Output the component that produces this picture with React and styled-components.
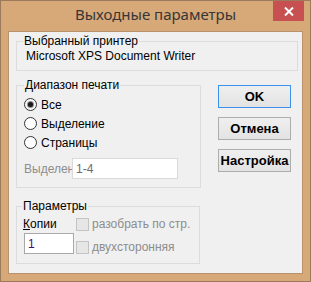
import React from "react";
import styled, { createGlobalStyle } from "styled-components";

const Global = createGlobalStyle`
  html, body { margin: 0; padding: 0; background: #ffffff; }
  * { box-sizing: border-box; }
`;

const Window = styled.div`
  width: 311px;
  height: 282px;
  background: #d7a979;
  border: 1px solid #9c7a5c;
  display: flex;
  flex-direction: column;
  padding: 0 7px 7px 7px;
  font-family: "Liberation Sans", Arial, sans-serif;
  font-size: 12px;
  color: #000;
`;

const TitleBar = styled.div`
  position: relative;
  height: 30px;
  display: flex;
  justify-content: center;
  align-items: flex-start;
  padding-top: 3px;
  margin: 0 -7px;
`;

const Title = styled.div`
  font-family: "Noto Sans", "Open Sans", sans-serif;
  font-size: 15px;
  line-height: 20px;
  color: #363636;
`;

const CloseButton = styled.div`
  position: absolute;
  top: 0;
  right: 6px;
  width: 31px;
  height: 20px;
  background: #c75050;
  display: flex;
  align-items: center;
  justify-content: center;
`;

const Client = styled.div`
  flex: 1;
  background: #f0f0f0;
  border: 1px solid #b8926c;
  padding: 3px 4px 0 7px;
  display: flex;
  flex-direction: column;
`;

const Group = styled.fieldset`
  margin: 0;
  border: 1px solid #dcdcdc;
  width: ${(p) => p.$w}px;
  height: ${(p) => p.$h}px;
  padding: ${(p) => p.$pad};
  min-inline-size: 0;
  margin-top: ${(p) => p.$mt || 0}px;
`;

const Legend = styled.legend`
  font-size: 12px;
  line-height: 13px;
  padding: 0 1px;
  margin-left: ${(p) => p.$ml}px;
`;

const PrinterName = styled.div`
  line-height: 14px;
`;

const Row = styled.div`
  display: flex;
  margin-top: 8px;
`;

const LeftColumn = styled.div`
  display: flex;
  flex-direction: column;
  width: 185px;
`;

const ButtonColumn = styled.div`
  display: flex;
  flex-direction: column;
  gap: 9px;
  margin-left: 17px;
  margin-top: 6px;
`;

const Button = styled.div`
  width: 73px;
  height: 23px;
  display: flex;
  align-items: center;
  justify-content: center;
  border: 1px solid ${(p) => (p.$default ? "#3c92ea" : "#adadad")};
  background: linear-gradient(#efefef, #e3e3e3);
  font-family: "Liberation Sans", Arial, sans-serif;
  font-weight: bold;
  font-size: 13px;
  color: #000;
`;

const RadioList = styled.div`
  display: flex;
  flex-direction: column;
  padding-top: 3px;
`;

const RadioRow = styled.div`
  height: 19px;
  display: flex;
  align-items: center;
  gap: 4px;
`;

const RadioCircle = styled.span`
  width: 13px;
  height: 13px;
  border-radius: 50%;
  border: 1px solid #333;
  background: #fff;
  display: flex;
  align-items: center;
  justify-content: center;
  &::after {
    content: "";
    width: 5px;
    height: 5px;
    border-radius: 50%;
    background: ${(p) => (p.$checked ? "#1a1a1a" : "transparent")};
    box-shadow: ${(p) => (p.$checked ? "0 0 1px 1px rgba(30,30,30,0.55)" : "none")};
  }
`;

const RangeRow = styled.div`
  display: flex;
  align-items: center;
  margin-top: 6px;
`;

const ClippedLabel = styled.span`
  width: 48px;
  overflow: hidden;
  white-space: nowrap;
  color: #8d8d8d;
`;

const TextBox = styled.div`
  width: ${(p) => p.$w}px;
  height: 21px;
  background: #fff;
  border: 1px solid ${(p) => (p.$disabled ? "#dadada" : "#a9a9a9")};
  padding-left: 3px;
  display: flex;
  align-items: center;
  color: ${(p) => (p.$disabled ? "#6d6d6d" : "#4a0a6a")};
  font-size: 12px;
`;

const ParamsBody = styled.div`
  display: flex;
  gap: 2px;
  padding-top: 4px;
`;

const CopiesColumn = styled.div`
  display: flex;
  flex-direction: column;
  gap: 2px;
  width: 51px;
`;

const CopiesLabel = styled.div`
  line-height: 14px;
  & u { text-decoration: underline; }
`;

const CopiesBox = styled(TextBox)`
  margin-left: 1px;
`;

const CheckColumn = styled.div`
  display: flex;
  flex-direction: column;
  gap: 9px;
`;

const CheckRow = styled.div`
  height: 14px;
  display: flex;
  align-items: center;
  gap: 3px;
  color: #8d8d8d;
`;

const CheckBox = styled.span`
  width: 13px;
  height: 13px;
  border: 1px solid #c4c4c4;
  background: #e6e6e6;
`;

export default function App() {
  return (
    <>
      <Global />
      <Window>
        <TitleBar>
          <Title>Выходные параметры</Title>
          <CloseButton>
            <svg width="10" height="9" viewBox="0 0 10 9">
              <path d="M1 0.5 L9 8.5 M9 0.5 L1 8.5" stroke="#fff" strokeWidth="2" />
            </svg>
          </CloseButton>
        </TitleBar>
        <Client>
          <Group $w={282} $h={36} $pad="1px 8px 0 9px">
            <Legend $ml={-3}>Выбранный принтер</Legend>
            <PrinterName>Microsoft XPS Document Writer</PrinterName>
          </Group>
          <Row>
            <LeftColumn>
              <Group $w={185} $h={109} $pad="0 7px 0 7px">
                <Legend $ml={0}>Диапазон печати</Legend>
                <RadioList>
                  <RadioRow>
                    <RadioCircle $checked />
                    <span>Все</span>
                  </RadioRow>
                  <RadioRow>
                    <RadioCircle />
                    <span>Выделение</span>
                  </RadioRow>
                  <RadioRow>
                    <RadioCircle />
                    <span>Страницы</span>
                  </RadioRow>
                </RadioList>
                <RangeRow>
                  <ClippedLabel>Выделенные</ClippedLabel>
                  <TextBox $w={106} $disabled>1-4</TextBox>
                </RangeRow>
              </Group>
              <Group $w={184} $h={64} $mt={12} $pad="0 6px 0 6px">
                <Legend $ml={-1}>Параметры</Legend>
                <ParamsBody>
                  <CopiesColumn>
                    <CopiesLabel>
                      <u>К</u>опии
                    </CopiesLabel>
                    <CopiesBox $w={50}>1</CopiesBox>
                  </CopiesColumn>
                  <CheckColumn>
                    <CheckRow>
                      <CheckBox />
                      <span>разобрать по стр.</span>
                    </CheckRow>
                    <CheckRow>
                      <CheckBox />
                      <span>двухсторонняя</span>
                    </CheckRow>
                  </CheckColumn>
                </ParamsBody>
              </Group>
            </LeftColumn>
            <ButtonColumn>
              <Button $default>OK</Button>
              <Button>Отмена</Button>
              <Button>Настройка</Button>
            </ButtonColumn>
          </Row>
        </Client>
      </Window>
    </>
  );
}
